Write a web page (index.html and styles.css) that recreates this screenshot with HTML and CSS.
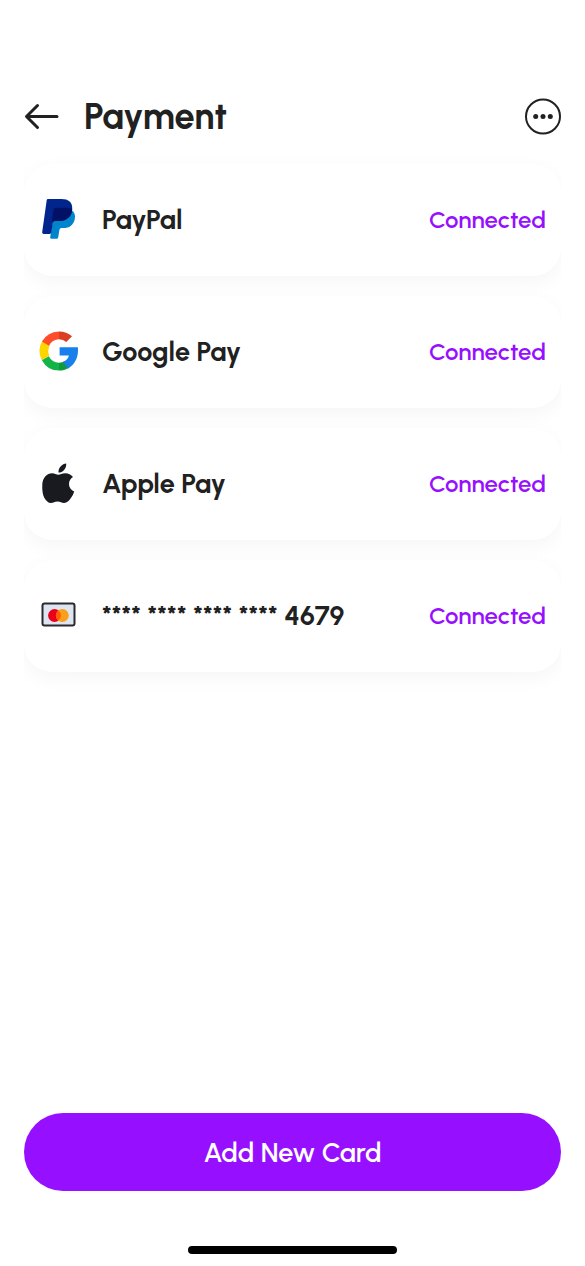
FILE: index.html
```
<!DOCTYPE html>
<html lang="en">
<head>
<meta charset="utf-8">
<meta name="viewport" content="width=device-width, initial-scale=1">
<title>Payment</title>
<link rel="stylesheet" href="styles.css">
</head>
<body>
<div class="screen">
  <header class="topbar">
    <button class="icon-button" type="button" aria-label="Back">
      <svg class="back-icon" viewBox="0 0 36 36" aria-hidden="true"><path d="M33 17.500H3M13.500 6.500 2.500 17.500l11 11"/></svg>
    </button>
    <h1 class="title">Payment</h1>
    <button class="icon-button" type="button" aria-label="More options">
      <svg class="more-icon" viewBox="0 0 36 36" aria-hidden="true"><circle class="ring" cx="18" cy="17.500" r="17"/><circle cx="10.700" cy="17.500" r="2.500"/><circle cx="18" cy="17.500" r="2.500"/><circle cx="25.300" cy="17.500" r="2.500"/></svg>
    </button>
  </header>

  <main class="content">
    <ul class="methods">
      <li class="method">
        <svg class="logo" viewBox="0 1 40 40" aria-hidden="true">
          <path fill="#0085cc" d="M32.500 11c3 2.200 4.200 5.300 3.200 9.500-1.500 6-5.500 8.600-11.200 8.600h-2c-1.100 0-1.900.8-2.100 1.900l-1.200 7.200c-.2 1.100-.9 1.600-1.900 1.600h-4.600c-1.100 0-1.700-.8-1.500-1.800L14.500 18z"/>
          <path fill="#00268e" d="M9.200 0h13.300c7 0 11.300 3.300 10.700 10.200-.7 8-6 11.700-12.800 11.700h-4.100c-1.400 0-2.300.8-2.500 2.100l-1.500 9.500c-.1.900-.8 1.400-1.700 1.400H4.800c-1.100 0-1.800-.8-1.600-1.900L7.700 1.300C7.800.5 8.400 0 9.200 0z"/>
          <path fill="#001166" d="M33.200 9.700c-2.100-.9-4.300-1-6.600-1H17c-1.400 0-2.200.8-2.500 2l-1.900 13.200c.3-1.300 1.500-2 3-2h4.800c7.500 0 12.700-4.500 12.800-12.200z"/>
        </svg>
        <span class="name">PayPal</span>
        <span class="status">Connected</span>
      </li>
      <li class="method">
        <svg class="logo" viewBox="0 1 40 40" aria-hidden="true">
          <path fill="#fed501" d="M3.500 9.600a20 20 0 0 0-.6 19.800l7.300-4.800a11.800 11.800 0 0 1 .4-9.800z"/>
          <path fill="#ff4c2a" d="M2.900 10.600A20 20 0 0 1 20 .4v7.800a11.900 11.900 0 0 0-10 6.500z"/>
          <path fill="#d93f21" d="M20 .4c5 0 9.500 1.700 13 4.900l-5.700 5.600A11.600 11.600 0 0 0 20 8.200z"/>
          <path fill="#12b347" d="M2.900 29.200A19.500 19.500 0 0 0 20 39.600v-7.800a12 12 0 0 1-10.200-6.500z"/>
          <path fill="#0d9b3d" d="M20 39.600c3.700 0 7-.9 9.800-2.600l-3.700-7.100a12 12 0 0 1-6.100 1.900z"/>
          <path fill="#197fea" d="M20.600 16.300h18.300c.8 8.900-2.200 16.500-9.600 21.200l-5.500-6.400c3.100-1.300 5.300-3.700 6.100-6.700h-9.300z"/>
        </svg>
        <span class="name">Google Pay</span>
        <span class="status">Connected</span>
      </li>
      <li class="method">
        <svg class="logo" viewBox="0 0.500 40 40" aria-hidden="true">
          <path fill="#181a20" d="M27.200.1c.3 2.600-.7 4.900-2.300 6.600-1.500 1.600-3.300 2.500-5.400 2.400-.2-2.500.8-4.700 2.300-6.300C23.200 1.300 25.300.2 27.200.1zM34 13.400c-2.500 1.600-4 3.900-4 7 0 3.600 2 6.200 5.200 7.500-.7 2.300-1.800 4.500-3.300 6.700-1.900 2.800-4 5-6.800 5-2.600 0-3.600-1.600-6.600-1.600s-4 1.600-6.600 1.600c-2.700 0-4.700-2.400-6.500-5.100C3.800 31.700 3 26.900 3.300 21c.4-6.800 4.700-11.200 9.800-11.200 2.600 0 4.300 1.400 6.200 1.400 1.800 0 3.700-1.500 7-1.500 3 0 5.900 1.400 7.700 3.700z"/>
        </svg>
        <span class="name">Apple Pay</span>
        <span class="status">Connected</span>
      </li>
      <li class="method">
        <svg class="logo" viewBox="0 0 40 40" aria-hidden="true">
          <rect x="3.500" y="7.500" width="32" height="22" rx="2" fill="#dce5f0" stroke="#2b292f" stroke-width="2"/>
          <circle cx="15.500" cy="19.500" r="6.400" fill="#eb001b"/>
          <circle cx="23.300" cy="19.500" r="6.400" fill="#fa9e1b"/>
          <path fill="#ff5f00" d="M19.400 14.400a6.400 6.400 0 0 1 0 10.200 6.400 6.400 0 0 1 0-10.200z"/>
        </svg>
        <span class="name">**** **** **** **** 4679</span>
        <span class="status">Connected</span>
      </li>
    </ul>
  </main>

  <footer class="bottom">
    <button class="primary" type="button">Add New Card</button>
    <div class="home-indicator"></div>
  </footer>
</div>
</body>
</html>
```
FILE: styles.css
```
* {
  box-sizing: border-box;
}

body {
  margin: 0;
  background: #fff;
  color: #212121;
  font-family: Urbanist, Lato, sans-serif;
}

button {
  font: inherit;
  border: 0;
  padding: 0;
  cursor: pointer;
}

.screen {
  display: flex;
  flex-direction: column;
  min-height: 100vh;
  padding: 93px 24px 12px;
}

.topbar {
  display: flex;
  align-items: center;
  height: 48px;
  margin-bottom: 23px;
}

.icon-button {
  width: 36px;
  height: 36px;
  background: none;
  color: #212121;
}

.icon-button svg {
  display: block;
  width: 36px;
  height: 36px;
  overflow: visible;
}

.back-icon {
  fill: none;
  stroke: currentColor;
  stroke-width: 3;
  stroke-linecap: round;
  stroke-linejoin: round;
}

.more-icon {
  fill: currentColor;
}

.ring {
  fill: none;
  stroke: currentColor;
  stroke-width: 2;
}

.title {
  flex: 1;
  margin: 0 0 0 24px;
  font-size: 36px;
  line-height: 48px;
  font-weight: 700;
}

.content {
  flex: 1;
}

.methods {
  display: flex;
  flex-direction: column;
  gap: 20px;
  margin: 0;
  padding: 0;
  list-style: none;
  overflow-x: clip;
}

.method {
  display: flex;
  align-items: center;
  gap: 23px;
  height: 112px;
  padding: 0 15px;
  border-radius: 28px;
  background: #fff;
  box-shadow: 0 6px 20px rgba(4, 6, 15, 0.04);
}

.logo {
  flex: none;
  width: 40px;
  height: 40px;
  overflow: visible;
}

.name {
  flex: 1;
  font-size: 27px;
  line-height: 32px;
  font-weight: 700;
}

.status {
  color: #9610ff;
  font-size: 24px;
  line-height: 32px;
  font-weight: 600;
}

.bottom {
  display: flex;
  flex-direction: column;
  align-items: center;
  gap: 55px;
}

.primary {
  width: 100%;
  height: 78px;
  border-radius: 39px;
  background: #9610ff;
  color: #fff;
  font-size: 27px;
  font-weight: 600;
}

.home-indicator {
  width: 209px;
  height: 8px;
  border-radius: 4px;
  background: #000;
}
```
